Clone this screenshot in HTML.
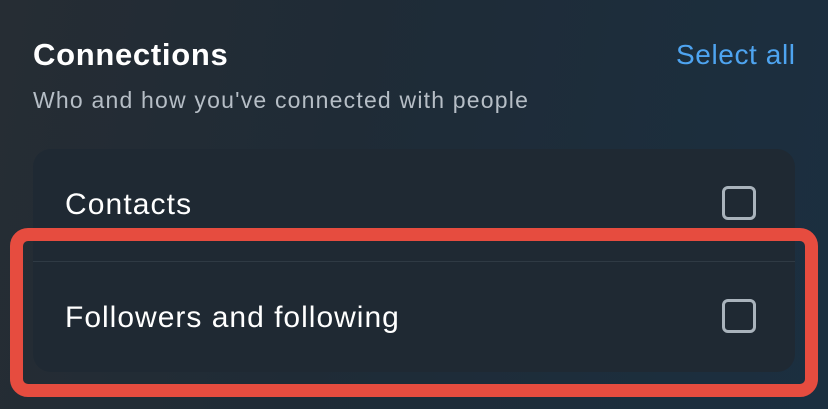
<!DOCTYPE html>
<html><head><style>
body{margin:0;width:828px;height:409px;overflow:hidden;background:linear-gradient(100deg,#262d34 0%,#1f2b36 40%,#1b2f40 100%);font-family:"Liberation Sans",sans-serif;position:relative}
.a{position:absolute;white-space:nowrap}
.card{position:absolute;left:33px;top:149px;width:762px;height:223px;background:#1f2933;border-radius:18px}
.sep{position:absolute;left:33px;top:261px;width:762px;height:1px;background:#2f3a44}
.cb{position:absolute;left:722px;width:28px;height:28px;border:3.5px solid #a9b3bc;border-radius:6px}
.red{position:absolute;left:10px;top:228px;width:782px;height:143px;border:13px solid #e64c3f;border-radius:18px}
</style></head><body>
<div class="a" style="left:33px;top:37px;font-size:31px;font-weight:bold;color:#fff;letter-spacing:0.7px">Connections</div>
<div class="a" style="left:676px;top:39px;font-size:28px;color:#4ea4f0;letter-spacing:0.6px">Select all</div>
<div class="a" style="left:33px;top:87px;font-size:23px;color:#b6bec6;letter-spacing:1.2px">Who and how you've connected with people</div>
<div class="card"></div>
<div class="sep"></div>
<div class="a" style="left:65px;top:188px;font-size:30px;color:#fff;letter-spacing:1.1px">Contacts</div>
<div class="cb" style="top:186px"></div>
<div class="a" style="left:65px;top:301px;font-size:30px;color:#fff;letter-spacing:1px">Followers and following</div>
<div class="cb" style="top:299px"></div>
<div class="red"></div>
</body></html>
